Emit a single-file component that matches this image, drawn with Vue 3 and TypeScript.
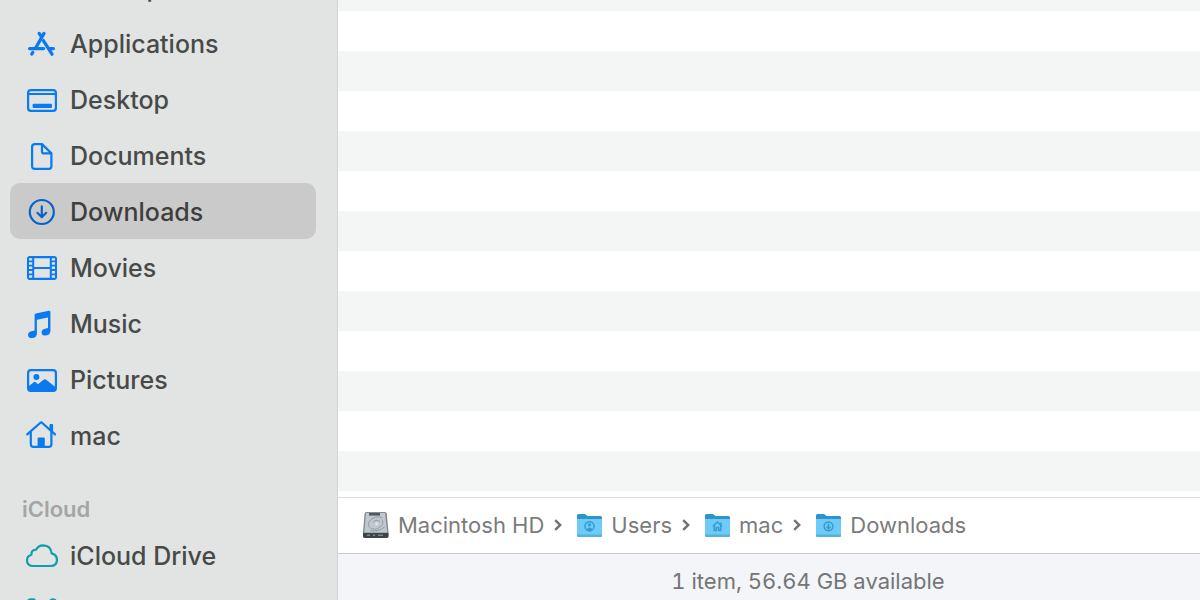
<script setup lang="ts">
interface Place {
  name: string
  icon: string
  active?: boolean
}

const favourites: Place[] = [
  { name: 'AirDrop', icon: '' },
  { name: 'Applications', icon: 'apps' },
  { name: 'Desktop', icon: 'desktop' },
  { name: 'Documents', icon: 'document' },
  { name: 'Downloads', icon: 'download', active: true },
  { name: 'Movies', icon: 'film' },
  { name: 'Music', icon: 'music' },
  { name: 'Pictures', icon: 'picture' },
  { name: 'mac', icon: 'home' },
]

const cloud: Place[] = [
  { name: 'iCloud Drive', icon: 'cloud' },
  { name: 'Shared', icon: 'shared' },
]

const path: Place[] = [
  { name: 'Macintosh HD', icon: 'disk' },
  { name: 'Users', icon: 'user' },
  { name: 'mac', icon: 'home' },
  { name: 'Downloads', icon: 'download' },
]
</script>

<template>
  <div class="finder">
    <nav class="sidebar" aria-label="Places">
      <ul class="places favourites">
        <li v-for="p in favourites" :key="p.name">
          <button type="button" class="place" :class="{ active: p.active }">
            <svg class="icon" viewBox="0 0 34 34" aria-hidden="true">
              <g v-if="p.icon === 'apps'" class="line thick">
                <path d="M15.2 6.4 L17 9.2 M20 6.4 L11.8 20.8 M5.6 21.6 H19.6 M8.8 25.4 L7.8 27" />
                <path d="M19.4 13.6 L28 27.2 M25.4 21.6 H29.4" />
              </g>
              <g v-else-if="p.icon === 'desktop'" class="line">
                <rect x="4.1" y="7.1" width="27.8" height="20.8" rx="2.8" />
                <path d="M4 11 H32" />
                <rect x="8.6" y="20.8" width="19.4" height="4.2" rx="1" class="solid" />
              </g>
              <g v-else-if="p.icon === 'document'" class="line">
                <path d="M18 5.1 H10.7 Q8.1 5.1 8.1 7.7 V27.3 Q8.1 29.9 10.7 29.9 H24.8 Q27.4 29.9 27.4 27.3 V14.4 Z" />
                <path d="M18 5.6 V12.4 Q18 14.4 20 14.4 H27" />
              </g>
              <g v-else-if="p.icon === 'download'" class="line">
                <circle cx="17.8" cy="17" r="12" />
                <path d="M17.8 11.4 V22 M13.4 17.8 L17.8 22.2 L22.2 17.8" />
              </g>
              <g v-else-if="p.icon === 'film'">
                <path class="solid" fill-rule="evenodd" d="M6 5 H30 Q33 5 33 8 V26 Q33 29 30 29 H6 Q3 29 3 26 V8 Q3 5 6 5 Z M10.2 7.2 V15.9 H25.8 V7.2 Z M10.2 18.1 V26.8 H25.8 V18.1 Z M5 7.2 V9.6 H8.2 V7.2 Z M5 11.2 V13.7 H8.2 V11.2 Z M5 15.6 V18.1 H8.2 V15.6 Z M5 19.9 V22.4 H8.2 V19.9 Z M5 24.2 V26.8 H8.2 V24.2 Z M27.8 7.2 V9.6 H31 V7.2 Z M27.8 11.2 V13.7 H31 V11.2 Z M27.8 15.6 V18.1 H31 V15.6 Z M27.8 19.9 V22.4 H31 V19.9 Z M27.8 24.2 V26.8 H31 V24.2 Z" />
              </g>
              <g v-else-if="p.icon === 'music'">
                <path class="solid" d="M10.6 8 Q10.6 6.8 11.8 6.5 L24.8 3.7 Q26.4 3.5 26.4 5 V24 Q26.4 28 21.6 28.6 Q17.6 28.6 17.6 25.4 Q17.6 22.4 21 21.7 L24 21 V10.4 L12.9 12.8 V26.4 Q12.9 30.6 8 31.1 Q4 31.1 4 28 Q4 25.1 7.4 24.3 L10.6 23.6 Z" />
              </g>
              <g v-else-if="p.icon === 'picture'">
                <rect class="line" x="4.1" y="7.1" width="27.8" height="20.8" rx="2.8" />
                <circle class="solid" cx="12.4" cy="14" r="3" />
                <path class="solid" d="M4 23.8 L9.8 19.2 Q10.8 18.5 11.8 19.3 L14 21.2 L19.8 16.6 Q21 15.8 22.2 16.7 L32 24.4 V26 Q32 28.4 30 28.4 H6 Q4 28.4 4 26 Z" />
              </g>
              <g v-else-if="p.icon === 'home'" class="line">
                <path d="M3.2 15.4 L16.4 3.7 Q17.2 3.1 18 3.7 L31 15.4 M26.6 11 V6.2 H28 V12" />
                <path d="M6.8 13 V25.2 Q6.8 27.8 9.4 27.8 H24.8 Q27.4 27.8 27.4 25.2 V13" />
                <path class="solid" d="M13.6 28 V19.6 Q13.6 18.6 14.6 18.6 H19.8 Q20.8 18.6 20.8 19.6 V28 Z" />
              </g>
            </svg>
            <span>{{ p.name }}</span>
          </button>
        </li>
      </ul>
      <h2 class="heading">iCloud</h2>
      <ul class="places">
        <li v-for="p in cloud" :key="p.name">
          <button type="button" class="place teal">
            <svg class="icon" viewBox="0 0 34 34" aria-hidden="true">
              <path v-if="p.icon === 'cloud'" class="line" d="M9.4 27 Q3 26.8 3 21.4 Q3 17 7.4 15.8 Q7.2 10.8 12.2 10.6 Q14.2 6.4 19.2 6.4 Q26.8 6.6 27.6 14.4 Q33 16 33 21 Q32.8 26.6 26.8 27 Z" />
              <g v-else class="line">
                <path d="M4 28 V7 Q4 4.4 6.6 4.4 H10 L13 8 H24 M32 14 V28 H4" />
                <circle cx="29" cy="7.4" r="3" />
              </g>
            </svg>
            <span>{{ p.name }}</span>
          </button>
        </li>
      </ul>
    </nav>
    <main class="content">
      <div class="rows"></div>
      <nav class="pathbar" aria-label="Path">
        <template v-for="(p, i) in path" :key="p.name">
          <svg v-if="i > 0" class="chevron" viewBox="0 0 8 14" aria-hidden="true"><path d="M1.2 2.2 L6.2 7 L1.2 11.8" /></svg>
          <button type="button" class="crumb">
            <svg v-if="p.icon === 'disk'" class="small" viewBox="0 0 28 28" aria-hidden="true">
              <path d="M4 1 H23 Q24.6 1 24.8 2.6 L26.5 21 V25 Q26.5 27 24.5 27 H3 Q1 27 1 25 V21 L2.6 2.6 Q2.8 1 4 1 Z" fill="#858c90" />
              <path d="M4 2 H23 L25.2 21.5 H2.3 Z" fill="#bfc8cd" />
              <path d="M7 2 H18 V4.6 H7 Z" fill="#55595c" />
              <path d="M20 6.5 Q13 4.5 8.5 9 Q4 14 8.5 17 Q13 20 18 16 M20 8.5 Q22.5 13 18 16 M11 11 Q15 7.5 18 11 M8 19.6 Q17 21 22.5 16" fill="none" stroke="#939da4" />
              <circle cx="14.6" cy="12.8" r="1.6" fill="#dde3e7" />
              <path d="M1 22 H26.5 V25 Q26.5 27 24.5 27 H3 Q1 27 1 25 Z" fill="#3f4446" />
              <path d="M5 24.2 H8 M11 24.2 H13 M16 24.2 H21" stroke="#7d8486" stroke-width="1.5" />
            </svg>
            <svg v-else class="small" viewBox="0 0 28 28" aria-hidden="true">
              <path d="M2 4.5 Q2 3 3.5 3 H10 L12.5 5 H25.5 Q27 5 27 6.5 V24 H2 Z" fill="#2f94c9" />
              <path d="M2 8 H27 V24.5 Q27 26 25.5 26 H3.5 Q2 26 2 24.5 Z" fill="#6ecaf6" />
              <path d="M2 23.4 H27 V24.5 Q27 26 25.5 26 H3.5 Q2 26 2 24.5 Z" fill="#55b2e0" />
              <g v-if="p.icon === 'user'" class="emblem">
                <circle cx="14.5" cy="15.3" r="4.6" />
                <circle cx="14.5" cy="13.8" r="1.6" class="fill" />
                <path class="fill" d="M11.4 18.2 Q14.5 14.8 17.6 18.2 Q14.5 20.6 11.4 18.2 Z" />
              </g>
              <g v-else-if="p.icon === 'home'" class="emblem">
                <path d="M9.8 15.3 L14.5 11 L19.2 15.3 M11.3 14.5 V19.5 H13.3 V16.5 H15.7 V19.5 H17.7 V14.5 M18 11.5 V14" />
              </g>
              <g v-else class="emblem">
                <circle cx="14.5" cy="15.3" r="4.4" />
                <path d="M14.5 12.8 V17.5 M12.5 15.7 L14.5 17.7 L16.5 15.7" />
              </g>
            </svg>
            <span>{{ p.name }}</span>
          </button>
        </template>
      </nav>
      <footer class="status">1 item, 56.64 GB available</footer>
    </main>
  </div>
</template>

<style>
body {
  margin: 0;
}
</style>

<style scoped>
.finder {
  display: flex;
  height: 100vh;
  overflow: hidden;
  font-family: Inter, "Liberation Sans", sans-serif;
  background: #fff;
}

.sidebar {
  box-sizing: border-box;
  flex: 0 0 338px;
  padding: 0 21px 0 10px;
  overflow: hidden;
  background: #e1e4e3;
  border-right: 1px solid #d2d5d4;
}

.places {
  margin: 0;
  padding: 0;
  list-style: none;
}

.favourites {
  margin-top: -41px;
}

button {
  border: 0;
  background: none;
  font: inherit;
  text-align: left;
}

.place {
  display: flex;
  align-items: center;
  gap: 12px;
  width: 100%;
  height: 56px;
  padding: 2px 14px 0;
  border-radius: 10px;
  color: #484a49;
  font-size: 25px;
  font-weight: 450;
}

.place.active {
  background: #cacaca;
  color: #3e3e3e;
}

.icon {
  width: 34px;
  height: 34px;
  color: #0a7af0;
}

.active .icon {
  color: #0863c9;
}

.teal .icon {
  color: #119eab;
}

.line {
  fill: none;
  stroke: currentColor;
  stroke-width: 2.2;
  stroke-linecap: round;
  stroke-linejoin: round;
}

.thick {
  stroke-width: 3.3;
}

.solid {
  fill: currentColor;
  stroke: none;
}

.heading {
  margin: 30px 0 2px 12px;
  color: #a3a6a5;
  font-size: 22px;
  font-weight: 600;
  line-height: 32px;
}

.content {
  display: flex;
  flex: 1;
  flex-direction: column;
  min-width: 0;
}

.rows {
  flex: 1;
  background: repeating-linear-gradient(#f4f6f5 0 40px, #fff 40px 80px) 0 -29px / 100% 800px;
}

.pathbar {
  display: flex;
  align-items: center;
  height: 53px;
  padding: 0 0 2px 24px;
  border-top: 1px solid #dcdddd;
  border-bottom: 1px solid #c9cbce;
}

.crumb {
  display: flex;
  align-items: center;
  gap: 8px;
  padding: 0;
  color: #7b7b7b;
  font-size: 22px;
  white-space: nowrap;
}

.small {
  width: 28px;
  height: 28px;
}

.chevron {
  width: 8px;
  height: 14px;
  margin: 0 13px 0 10px;
  fill: none;
  stroke: #747474;
  stroke-width: 2.5;
}

.emblem {
  fill: none;
  stroke: #349dd0;
  stroke-width: 1.5;
}

.emblem .fill {
  fill: #349dd0;
  stroke: none;
}

.status {
  height: 46px;
  padding: 0 24px 0 102px;
  background: #f4f5f8;
  color: #747577;
  font-size: 22px;
  font-variant-numeric: tabular-nums;
  line-height: 54px;
  text-align: center;
  overflow: hidden;
  white-space: nowrap;
}
</style>
